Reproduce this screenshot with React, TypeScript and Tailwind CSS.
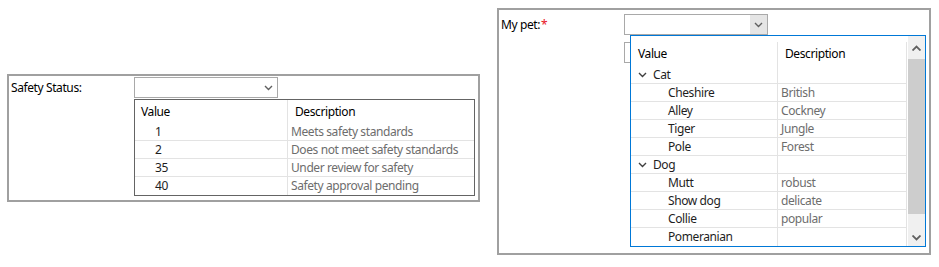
import React from 'react';

const font = { fontFamily: '"Segoe UI", "Noto Sans", "Open Sans", sans-serif' };

const Chevron = ({ className = '' }: { className?: string }) => (
  <svg width="9" height="6" viewBox="0 0 9 6" className={className}>
    <path d="M1 1 L4.5 4.5 L8 1" fill="none" stroke="currentColor" strokeWidth="1.4" />
  </svg>
);

const ScrollArrow = ({ up }: { up?: boolean }) => (
  <svg width="9" height="6" viewBox="0 0 9 6">
    <path d={up ? 'M0.5 5.5 L4.5 1.5 L8.5 5.5' : 'M0.5 0.5 L4.5 4.5 L8.5 0.5'} fill="none" stroke="#606060" strokeWidth="1.8" />
  </svg>
);

const ComboBox = ({ active }: { active?: boolean }) => (
  <div className="flex h-[21px] w-[144px] border border-[#a9a9a9] bg-white">
    <div className="flex-1" />
    <div className={`flex w-[17px] items-center justify-center ${active ? 'bg-[#e5e5e5]' : ''} text-[#606060]`}>
      <Chevron />
    </div>
  </div>
);

const safetyRows = [
  { value: '1', description: 'Meets safety standards' },
  { value: '2', description: 'Does not meet safety standards' },
  { value: '35', description: 'Under review for safety' },
  { value: '40', description: 'Safety approval pending' },
];

const petGroups = [
  {
    name: 'Cat',
    items: [
      { value: 'Cheshire', description: 'British' },
      { value: 'Alley', description: 'Cockney' },
      { value: 'Tiger', description: 'Jungle' },
      { value: 'Pole', description: 'Forest' },
    ],
  },
  {
    name: 'Dog',
    items: [
      { value: 'Mutt', description: 'robust' },
      { value: 'Show dog', description: 'delicate' },
      { value: 'Collie', description: 'popular' },
      { value: 'Pomeranian', description: '' },
    ],
  },
];

const SafetyPanel = () => (
  <div className="mt-[74px] ml-[7px] flex w-[473px] border-2 border-[#a0a0a0] bg-white">
    <div className="mt-[1px] flex h-[21px] w-[125px] items-center pl-[2px] text-[12px] text-black">Safety Status:</div>
    <div className="flex flex-col pt-[1px] pb-[4px]">
      <ComboBox />
      <div className="mt-[1px] flex w-[341px] flex-col border border-[#646464] bg-white text-[12px]">
        <div className="flex h-[23px]">
          <div className="flex w-[153px] items-center border-r border-[#e3e3e3] pl-[6px] text-black">Value</div>
          <div className="flex flex-1 items-center pl-[7px] text-black">Description</div>
        </div>
        {safetyRows.map((row, i) => (
          <div
            key={row.value}
            className={`flex h-[18px] ${i < safetyRows.length - 1 ? 'border-b border-[#e3e3e3]' : ''}`}
          >
            <div className="flex w-[153px] items-center border-r border-[#e3e3e3] pl-[20px] text-[#1e1e1e]">{row.value}</div>
            <div className="flex flex-1 items-center pl-[3px] text-[#6d6d6d]">{row.description}</div>
          </div>
        ))}
      </div>
    </div>
  </div>
);

const PetRow = ({ value, description, group, last }: { value: string; description: string; group?: boolean; last?: boolean }) => (
  <div className={`flex h-[18px] ${last ? '' : 'border-b border-[#e3e3e3]'}`}>
    <div className={`flex w-[147px] items-center border-r border-[#e3e3e3] ${group ? 'pl-[7px]' : 'pl-[37px]'} text-[#1e1e1e]`}>
      {group && <Chevron className="mr-[6px] text-[#404040]" />}
      {value}
    </div>
    <div className="flex flex-1 items-center border-r border-[#e3e3e3] pl-[3px] text-[#6d6d6d]">{description}</div>
  </div>
);

const PetPanel = () => {
  const rows = petGroups.flatMap((g) => [
    { value: g.name, description: '', group: true },
    ...g.items.map((it) => ({ ...it, group: false })),
  ]);
  return (
    <div className="mt-[8px] ml-[17px] flex h-[247px] w-[434px] border-2 border-[#a0a0a0] bg-white">
      <div className="mt-[4px] flex h-[21px] w-[125px] items-center pl-[2px] text-[12px] text-black">
        My pet:<span className="ml-[1px] text-[#e81123]">*</span>
      </div>
      <div className="relative flex flex-col pt-[4px]">
        <ComboBox active />
        <div className="mt-[7px]">
          <ComboBox />
        </div>
        <div className="absolute top-[25px] left-[6px] flex h-[212px] w-[296px] border border-[#0078d7] bg-white text-[12px]">
          <div className="flex flex-1 flex-col">
            <div className="flex h-[30px] pt-[6px]">
              <div className="flex w-[147px] items-center border-r border-[#e3e3e3] pl-[7px] text-black">Value</div>
              <div className="flex flex-1 items-center border-r border-[#e3e3e3] pl-[7px] text-black">Description</div>
            </div>
            {rows.map((row, i) => (
              <PetRow key={row.value} {...row} last={i === rows.length - 1} />
            ))}
          </div>
          <div className="ml-[1px] flex w-[17px] flex-col bg-[#f0f0f0]">
            <div className="flex h-[23px] items-center justify-center">
              <ScrollArrow up />
            </div>
            <div className="h-[155px] bg-[#cdcdcd]" />
            <div className="flex-1" />
            <div className="flex h-[17px] items-center justify-center">
              <ScrollArrow />
            </div>
          </div>
        </div>
      </div>
    </div>
  );
};

export default function App() {
  return (
    <div className="flex h-[267px] w-[939px] items-start bg-white tracking-[-0.4px]" style={font}>
      <SafetyPanel />
      <PetPanel />
    </div>
  );
}
